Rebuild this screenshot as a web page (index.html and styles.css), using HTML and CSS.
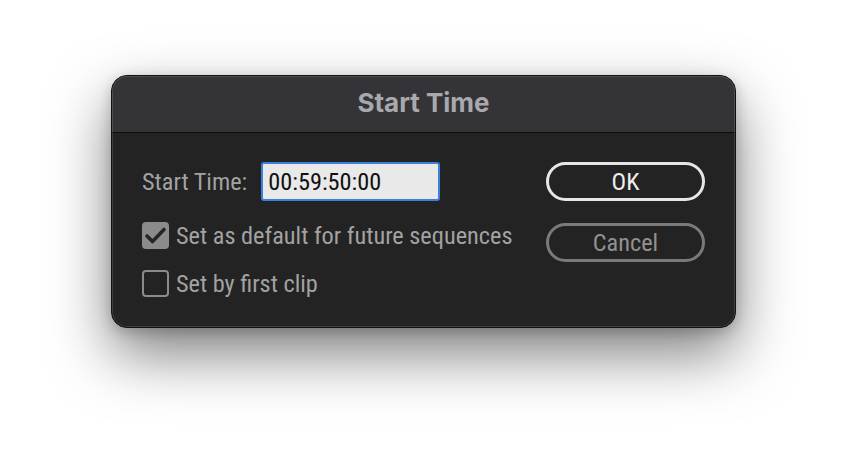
FILE: index.html
```html
<!DOCTYPE html>
<html>
<head>
<meta charset="utf-8">
<title>Start Time</title>
<link rel="stylesheet" href="styles.css">
</head>
<body>
<div class="stage">
  <div class="dialog">
    <div class="titlebar">Start Time</div>
    <div class="content">
      <div class="left">
        <div class="row field">
          <span class="label">Start Time:</span>
          <div class="input">00:59:50:00</div>
        </div>
        <div class="row check">
          <span class="box checked">
            <svg viewBox="0 0 27 27" width="27" height="27"><path d="M5 14 L10.5 19.5 L22 7.5" fill="none" stroke="#262626" stroke-width="3.6" stroke-linecap="round" stroke-linejoin="round"/></svg>
          </span>
          <span class="text">Set as default for future sequences</span>
        </div>
        <div class="row check">
          <span class="box"></span>
          <span class="text">Set by first clip</span>
        </div>
      </div>
      <div class="right">
        <div class="btn ok">OK</div>
        <div class="btn cancel">Cancel</div>
      </div>
    </div>
  </div>
</div>
</body>
</html>
```
FILE: styles.css
```css
html, body {
  margin: 0;
  padding: 0;
  background: #ffffff;
}
.stage {
  width: 848px;
  height: 476px;
  padding: 75px 0 0 111px;
  box-sizing: border-box;
  overflow: hidden;
}
.dialog {
  width: 625px;
  height: 253px;
  box-sizing: border-box;
  border: 1px solid #111111;
  border-radius: 16px;
  overflow: hidden;
  background: #232323;
  box-shadow: 0 26px 60px rgba(0, 0, 0, 0.5), 0 4px 14px rgba(0, 0, 0, 0.2);
  display: flex;
  flex-direction: column;
  position: relative;
}
.dialog::after {
  content: "";
  position: absolute;
  inset: 0;
  border-radius: 15px;
  box-shadow: inset 0 0 0 1px rgba(255, 255, 255, 0.13);
  pointer-events: none;
}
.titlebar {
  height: 56px;
  flex: 0 0 56px;
  background: #343438;
  border-bottom: 1px solid #0c0c0c;
  color: #a9a9ad;
  font-family: Inter, "Liberation Sans", sans-serif;
  font-weight: 700;
  font-size: 26px;
  line-height: 54px;
  text-align: center;
}
.content {
  flex: 1;
  display: flex;
  justify-content: space-between;
  padding: 29px 30px 0 30px;
  font-family: "Roboto Condensed", "Liberation Sans", sans-serif;
  font-size: 24.3px;
}
.left {
  display: flex;
  flex-direction: column;
  gap: 21px;
}
.row {
  display: flex;
  align-items: center;
}
.field {
  height: 39px;
}
.label {
  color: #a2a2a2;
  margin-right: 14px;
}
.input {
  width: 179px;
  height: 39px;
  box-sizing: border-box;
  border: 2px solid #3b80de;
  border-radius: 3px;
  background: #e9e9e9;
  color: #111111;
  padding-left: 5px;
  line-height: 35px;
}
.check {
  height: 27px;
  color: #a2a2a2;
}
.box {
  width: 27px;
  height: 27px;
  box-sizing: border-box;
  border: 2.5px solid #8b8b8b;
  border-radius: 4px;
  margin-right: 7px;
  display: flex;
  align-items: center;
  justify-content: center;
}
.box.checked {
  background: #8b8b8b;
}
.box svg {
  display: block;
  flex: 0 0 27px;
}
.right {
  display: flex;
  flex-direction: column;
  gap: 22px;
}
.btn {
  width: 159px;
  height: 39px;
  box-sizing: border-box;
  border-radius: 20px;
  border: 3px solid #e6e6e6;
  text-align: center;
  line-height: 33px;
  color: #eeeeee;
}
.btn.cancel {
  border-color: #7a7a7a;
  color: #929292;
}
```
